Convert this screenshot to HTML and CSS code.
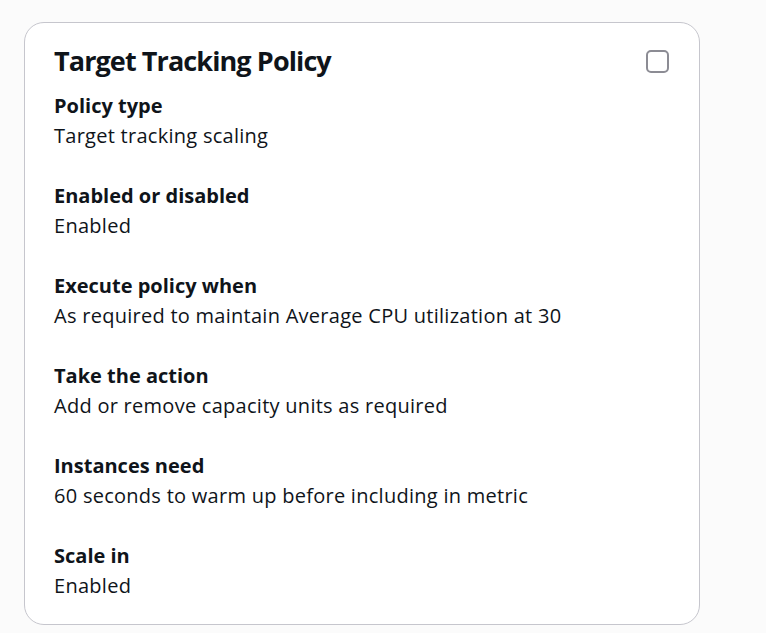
FILE: index.html
```html
<!DOCTYPE html>
<html lang="en">
<head>
<meta charset="utf-8">
<title>Target Tracking Policy</title>
<link rel="stylesheet" href="styles.css">
</head>
<body>
<main class="page">
  <section class="card">
    <header class="card-header">
      <h2 class="card-title">Target Tracking Policy</h2>
      <span class="checkbox" role="checkbox" aria-checked="false"></span>
    </header>
    <dl class="fields">
      <div class="field">
        <dt class="label">Policy type</dt>
        <dd class="value">Target tracking scaling</dd>
      </div>
      <div class="field">
        <dt class="label">Enabled or disabled</dt>
        <dd class="value">Enabled</dd>
      </div>
      <div class="field">
        <dt class="label">Execute policy when</dt>
        <dd class="value">As required to maintain Average CPU utilization at 30</dd>
      </div>
      <div class="field">
        <dt class="label">Take the action</dt>
        <dd class="value">Add or remove capacity units as required</dd>
      </div>
      <div class="field">
        <dt class="label">Instances need</dt>
        <dd class="value">60 seconds to warm up before including in metric</dd>
      </div>
      <div class="field">
        <dt class="label">Scale in</dt>
        <dd class="value">Enabled</dd>
      </div>
    </dl>
  </section>
</main>
</body>
</html>
```

FILE: styles.css
```css
* { box-sizing: border-box; }
html, body {
  margin: 0;
  padding: 0;
  background: #fbfbfb;
}
body {
  font-family: "Open Sans", "Noto Sans", sans-serif;
  color: #0f141a;
}
.page {
  padding: 22px 0 0 24px;
}
.card {
  width: 676px;
  height: 603px;
  background: #ffffff;
  border: 1px solid #c6c6cd;
  border-radius: 20px;
  padding: 19px 30px 0 29px;
}
.card-header {
  display: flex;
  justify-content: space-between;
  align-items: flex-start;
}
.card-title {
  margin: 0;
  font-size: 27px;
  line-height: 36px;
  font-weight: 700;
  letter-spacing: -0.9px;
  padding-top: 1px;
}
.checkbox {
  width: 23px;
  height: 23px;
  border: 2px solid #8c8c94;
  border-radius: 5px;
  margin-top: 8px;
  background: #fff;
}
.fields {
  margin: 12px 0 0;
  display: flex;
  flex-direction: column;
  gap: 30px;
}
.field { display: block; }
.label {
  font-size: 20px;
  line-height: 30px;
  font-weight: 700;
}
.value {
  margin: 0;
  font-size: 20px;
  line-height: 30px;
  letter-spacing: 0.27px;
}
```
